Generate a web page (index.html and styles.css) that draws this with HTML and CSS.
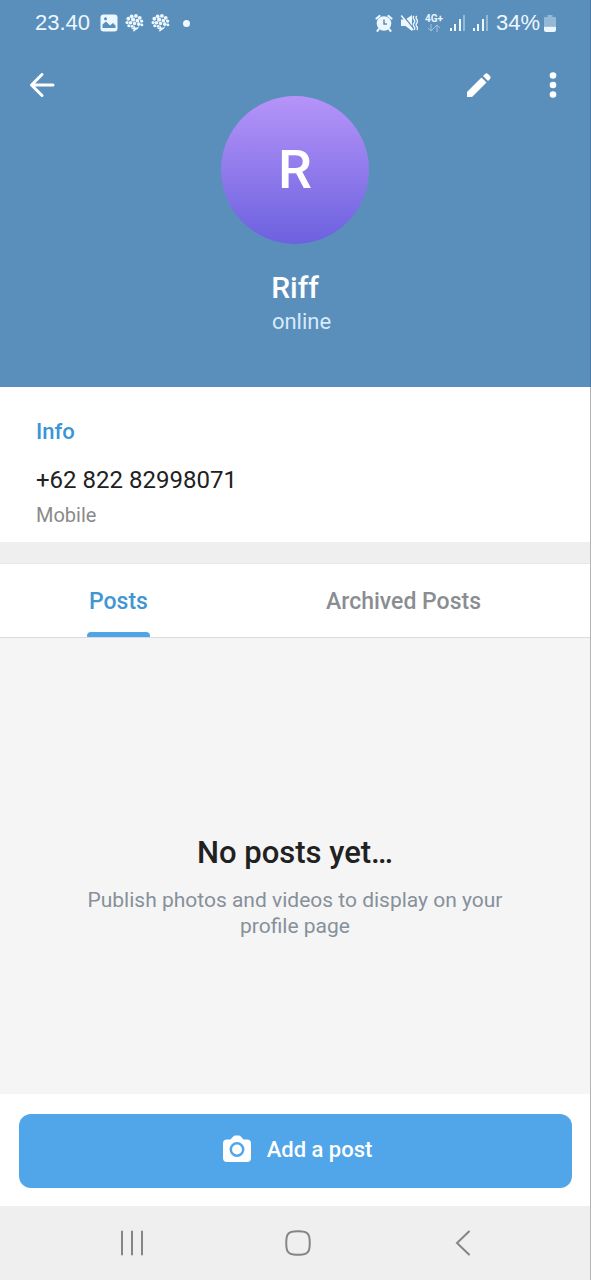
FILE: index.html
```html
<!DOCTYPE html>
<html lang="en">
<head>
<meta charset="utf-8">
<meta name="viewport" content="width=device-width, initial-scale=1">
<title>Riff</title>
<link rel="stylesheet" href="styles.css">
</head>
<body>
<div class="screen">
  <header class="header">
    <div class="status-bar">
      <span class="clock">23.40</span>
      <svg class="notice" width="18" height="18" viewBox="0 0 18 18"><rect x="0.5" y="0.5" width="17" height="17" rx="3" fill="currentColor"/><path d="M2.500 14V10.500l3.500-3 4 4 3-2.500 2.500 2.500V14z" class="cutout"/><circle cx="5.500" cy="4.800" r="1.500" class="cutout"/></svg>
      <svg class="notice" width="19" height="20" viewBox="0 0 20 20"><use href="#tree"/></svg>
      <svg class="notice" width="19" height="20" viewBox="0 0 20 20"><use href="#tree"/></svg>
      <span class="more-dot"></span>
      <div class="system-icons">
        <svg width="18" height="18" viewBox="0 0 18 18"><circle cx="9" cy="9.500" r="7.300" fill="currentColor"/><path d="M1.500 4.500 4.500 2M16.500 4.500 13.500 2M3.500 15.500 2.500 16.800M14.500 15.500l1 1.300" stroke="currentColor" stroke-width="2.200" stroke-linecap="round"/><path d="M9 5.500V10h3" class="cutout-line"/></svg>
        <svg width="18" height="18" viewBox="0 0 18 18"><path d="M1 5.500h4.500L12 1v16l-6.500-5H1z" fill="currentColor"/><path d="M2.500 1 13 14" class="cutout-line"/><path d="M1.200 1.500 13 16" stroke="currentColor" stroke-width="1.500"/><path d="M14 2q-1.500 1.800 0 3.500t0 3.500 0 3.500 0 3.500M16.800 2q-1.500 1.800 0 3.500t0 3.500 0 3.500 0 3.500" fill="none" stroke="currentColor" stroke-width="1.300"/></svg>
        <span class="network">4G+<svg width="14" height="8" viewBox="0 0 14 8"><path d="M4 0v7M1 4l3 3 3-3M10 8V1M7 4l3-3 3 3" fill="none" stroke="currentColor"/></svg></span>
        <svg width="16" height="16" viewBox="0 0 16 16"><use href="#signal"/></svg>
        <svg width="16" height="16" viewBox="0 0 16 16"><use href="#signal"/></svg>
        <span class="battery-level">34%</span>
        <svg width="12" height="17" viewBox="0 0 12 17"><path d="M3.500 0h5v2H11q1 0 1 1v8H0V3q0-1 1-1h2.500z" fill="currentColor" opacity=".4"/><path d="M0 11.500h12V15q0 2-2 2H2q-2 0-2-2z" fill="currentColor"/></svg>
      </div>
    </div>
    <div class="profile-bar">
      <button class="icon-button back" aria-label="Back"><svg width="26" height="26" viewBox="0 0 26 26"><path d="M24 13H2.500M13 2.500 2.500 13 13 23.500" fill="none" stroke="currentColor" stroke-width="3" stroke-linecap="round" stroke-linejoin="round"/></svg></button>
      <div class="profile">
        <div class="avatar">R</div>
        <h1 class="name">Riff</h1>
        <p class="presence">online</p>
      </div>
      <div class="actions">
        <button class="icon-button" aria-label="Edit"><svg width="26" height="26" viewBox="0 0 26 26"><path d="M1 20 15.500 5.500l5 5L6 25H1z" fill="currentColor"/><path d="m17 4 2-2q1.500-1.500 3 0l2 2q1.500 1.500 0 3l-2 2z" fill="currentColor"/></svg></button>
        <button class="icon-button" aria-label="More options"><svg width="8" height="26" viewBox="0 0 8 26"><g fill="currentColor"><circle cx="4" cy="3.500" r="3.300"/><circle cx="4" cy="13" r="3.300"/><circle cx="4" cy="22.500" r="3.300"/></g></svg></button>
      </div>
    </div>
  </header>

  <main class="content">
    <section class="info">
      <h2 class="info-title">Info</h2>
      <p class="phone">+62 822 82998071</p>
      <p class="phone-type">Mobile</p>
    </section>
    <div class="tabs" role="tablist">
      <button class="tab active" role="tab" aria-selected="true"><span class="tab-label">Posts</span></button>
      <button class="tab" role="tab" aria-selected="false"><span class="tab-label">Archived Posts</span></button>
    </div>
    <section class="empty">
      <h2 class="empty-title">No posts yet…</h2>
      <p class="empty-text">Publish photos and videos to display on your profile page</p>
    </section>
  </main>

  <footer class="footer">
    <button class="add-post">
      <svg width="30" height="30" viewBox="0 0 30 30"><path d="M5 4.500h3.500L11 1.700Q12 .5 13.500.5h3Q18 .5 19 1.700l2.500 2.800H25q4 0 4 4V23q0 4-4 4H5q-4 0-4-4V8.500q0-4 4-4z" fill="currentColor"/><circle cx="15" cy="14.500" r="6.200" fill="none" class="lens"/></svg>
      <span>Add a post</span>
    </button>
  </footer>
  <nav class="system-nav">
    <button class="nav-button" aria-label="Recent apps"><svg width="24" height="26" viewBox="0 0 24 26"><path d="M2 1.500v23M12 1.500v23M22 1.500v23" class="nav-line"/></svg></button>
    <button class="nav-button" aria-label="Home"><svg width="26" height="26" viewBox="0 0 26 26"><path d="M8.500 1.500Q13 1 17.500 1.500 24 2 24.500 8.500 25 13 24.500 17.500 24 24 17.500 24.500 13 25 8.500 24.500 2 24 1.500 17.500 1 13 1.500 8.500 2 2 8.500 1.500z" class="nav-line"/></svg></button>
    <button class="nav-button" aria-label="Back"><svg width="16" height="26" viewBox="0 0 16 26"><path d="M14 1.500 2 13l12 11.500" class="nav-line"/></svg></button>
  </nav>
</div>
<svg class="symbols" aria-hidden="true">
  <defs>
    <g id="tree" fill="currentColor">
      <circle cx="7" cy="3" r="2"/><circle cx="11.500" cy="2.500" r="2"/><circle cx="15.500" cy="4.500" r="2"/><circle cx="3.500" cy="5.500" r="2"/><circle cx="8.500" cy="6.500" r="2.200"/><circle cx="13" cy="7.500" r="2"/><circle cx="17.500" cy="8" r="1.800"/><circle cx="2.200" cy="9.500" r="1.700"/><circle cx="5.800" cy="9.800" r="1.900"/><circle cx="10" cy="10.500" r="1.800"/><circle cx="14.500" cy="11.200" r="1.900"/><circle cx="4" cy="13" r="1.600"/><circle cx="17.800" cy="12" r="1.500"/><circle cx="7.500" cy="13.500" r="1.600"/>
      <path d="M6 15.500q3 .5 4-3l1 2.500q3 0 4-2-1 4-4 4.500L9.500 19 8 18.500l1.500-1.500z"/>
    </g>
    <g id="signal" fill="currentColor">
      <rect x="0" y="13" width="2" height="3"/><rect x="4" y="9" width="2" height="7"/><rect x="9" y="4" width="2" height="12"/><rect x="13" y="0" width="2" height="16" opacity=".4"/>
    </g>
  </defs>
</svg>
</body>
</html>
```
FILE: styles.css
```css
* {
  box-sizing: border-box;
}

body,
h1,
h2,
p {
  margin: 0;
}

body {
  font-family: Roboto, "Noto Sans", sans-serif;
  color: #212121;
  background: #fff;
}

svg {
  display: block;
  flex: none;
}

button {
  border: 0;
  padding: 0;
  background: none;
  color: inherit;
  font: inherit;
}

.symbols {
  display: none;
}

.screen {
  display: flex;
  flex-direction: column;
  min-height: 100vh;
  border-right: 1px solid #b4b4b4;
}

.header {
  background: #5a8fbb;
  color: #fff;
  margin-right: -1px;
  border-right: 1px solid #4b79a5;
}

.status-bar {
  display: flex;
  align-items: center;
  height: 46px;
  padding: 0 34px 0 35px;
  color: #ecf7ff;
}

.clock,
.battery-level {
  font-family: "Liberation Sans", sans-serif;
  font-size: 22px;
}

.notice {
  margin-left: 7px;
}

.clock + .notice {
  margin-left: 10px;
}

.cutout {
  fill: #5a8fbb;
}

.cutout-line {
  fill: none;
  stroke: #5a8fbb;
  stroke-width: 1.500;
}

.more-dot {
  width: 7px;
  height: 7px;
  margin-left: 13px;
  border-radius: 50%;
  background: currentColor;
}

.system-icons {
  display: flex;
  align-items: center;
  gap: 7px;
  margin-left: auto;
}

.network {
  display: flex;
  flex-direction: column;
  align-items: center;
  font-size: 10px;
  font-weight: 700;
  line-height: 10px;
}

.network svg {
  opacity: .5;
}

.battery-level + svg {
  margin-left: -3px;
}

.profile-bar {
  display: grid;
  grid-template-columns: 1fr auto 1fr;
  align-items: start;
}

.icon-button {
  display: grid;
  place-items: center;
  width: 74px;
  height: 78px;
}

.back {
  margin-left: 5px;
}

.actions {
  display: flex;
  justify-content: flex-end;
}

.profile {
  display: flex;
  flex-direction: column;
  align-items: center;
  padding: 50px 0 50px;
}

.avatar {
  display: grid;
  place-items: center;
  width: 148px;
  height: 148px;
  border-radius: 50%;
  background: linear-gradient(#b694f9, #6c61df);
  font-size: 54px;
  font-weight: 500;
  line-height: 60px;
}

.name {
  margin-top: 25px;
  font-size: 30px;
  font-weight: 500;
  line-height: 38px;
}

.presence {
  padding-left: 13px;
  font-size: 22px;
  line-height: 30px;
  color: #d7eafa;
}

.content {
  flex: 1;
  display: flex;
  flex-direction: column;
}

.info {
  padding: 31px 36px 13px;
}

.info-title {
  font-size: 22px;
  font-weight: 500;
  line-height: 28px;
  color: #3a95d5;
}

.phone {
  margin-top: 19px;
  font-size: 24px;
  line-height: 30px;
}

.phone-type {
  margin-top: 6px;
  font-size: 20px;
  line-height: 28px;
  color: #8a8a8a;
}

.tabs {
  display: flex;
  padding-right: 20px;
  border-top: 21px solid #efefef;
  border-bottom: 1px solid #d9dbdc;
  box-shadow: inset 0 1px #e8e8e8;
}

.tab {
  flex: 1 1 auto;
  display: flex;
  justify-content: center;
  font-size: 23px;
  font-weight: 500;
  color: #8a8d91;
}

.tab.active {
  color: #4296d2;
}

.tab-label {
  display: flex;
  flex-direction: column;
  justify-content: space-between;
  height: 74px;
  padding: 25px 2px 0;
  line-height: 28px;
}

.tab.active .tab-label::after {
  content: "";
  height: 5px;
  margin: 0 -2px;
  border-radius: 4px 4px 0 0;
  background: #50a5e6;
}

.empty {
  flex: 1;
  display: flex;
  flex-direction: column;
  align-items: center;
  justify-content: center;
  padding: 41px 60px 0;
  background: #f5f5f5;
  text-align: center;
}

.empty-title {
  font-size: 31px;
  font-weight: 500;
  line-height: 38px;
}

.empty-text {
  margin-top: 15px;
  font-size: 21px;
  line-height: 26px;
  color: #87909b;
}

.footer {
  padding: 20px 18px 18px 19px;
}

.add-post {
  display: flex;
  align-items: center;
  justify-content: center;
  gap: 15px;
  width: 100%;
  height: 74px;
  padding: 0 0 3px 3px;
  border-radius: 12px;
  background: #50a6e9;
  color: #fff;
  font-size: 22px;
  font-weight: 500;
}

.lens {
  stroke: #50a6e9;
  stroke-width: 2.500;
}

.system-nav {
  display: flex;
  padding: 0 44px 0 49px;
  background: #efefef;
}

.nav-button {
  display: grid;
  flex: 1;
  place-items: center;
  height: 74px;
}

.nav-line {
  fill: none;
  stroke: #858585;
  stroke-width: 2;
  stroke-linecap: round;
}
```
